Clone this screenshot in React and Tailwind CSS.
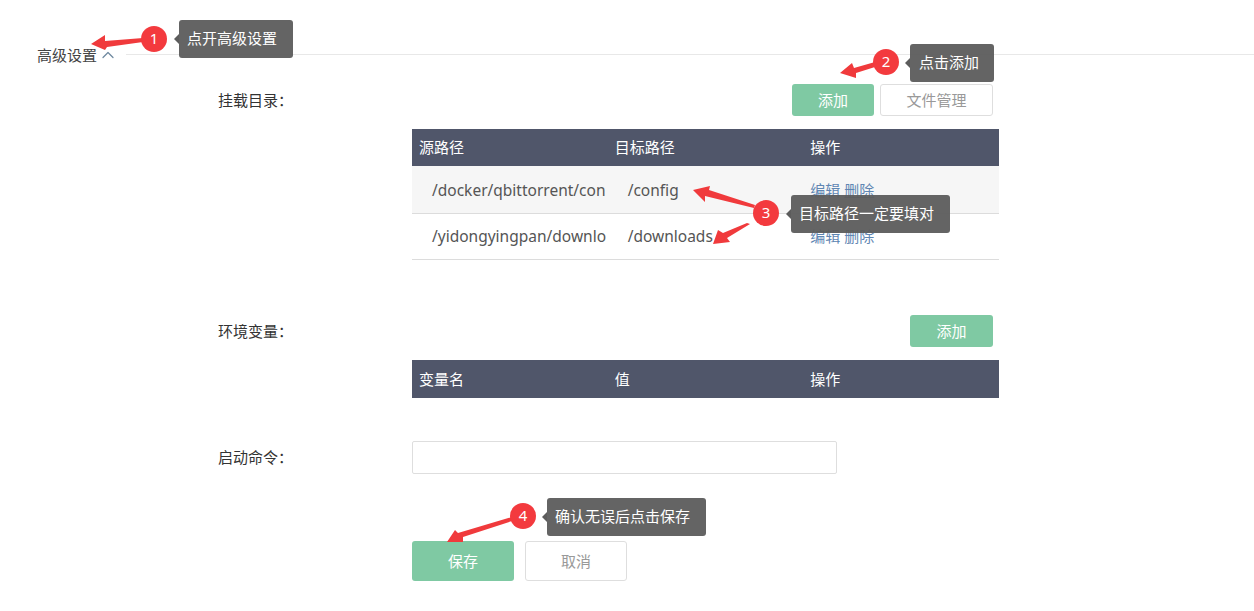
import { ChevronUp } from "lucide-react";

const FONT = "font-['Noto_Sans','Noto_Sans_CJK_SC',sans-serif]";

const MOUNTS = [
  { source: "/docker/qbittorrent/con", target: "/config", striped: true, hover: true },
  { source: "/yidongyingpan/downlo", target: "/downloads" },
];

function HeaderRow({ cols, className = "" }) {
  return (
    <div className={`grid grid-cols-3 items-center bg-[#50566a] text-white text-[15px] ${className}`}>
      {cols.map((c) => (
        <div key={c} className="pl-[7px]">{c}</div>
      ))}
    </div>
  );
}

function MountRow({ row }) {
  return (
    <div className={`grid grid-cols-3 items-center border-b border-[#dcdcdc] text-[#555] ${row.striped ? "h-[48px] pt-[2px] bg-[#f6f6f6]" : "h-[46px] bg-white"}`}>
      <div className="pl-[20px] whitespace-nowrap text-[15.5px]">{row.source}</div>
      <div className="pl-[20px] text-[15.5px]">{row.target}</div>
      <div className="pl-[7px] text-[15px] text-[#5f86b3] whitespace-nowrap">
        <span>编辑</span>
        <span className={`ml-[4px] ${row.hover ? "underline" : ""}`}>删除</span>
      </div>
    </div>
  );
}

function FormRow({ label, children, className = "" }) {
  return (
    <div className={`grid grid-cols-[194px_587px] ${className}`}>
      <div className="h-[32px] leading-[32px] text-[15px] text-[#333]">{label}：</div>
      <div>{children}</div>
    </div>
  );
}

function GreenButton({ children, className = "" }) {
  return (
    <button className={`rounded-[3px] bg-[#7fc9a3] text-white text-[15px] ${className}`}>{children}</button>
  );
}

function OutlineButton({ children, className = "" }) {
  return (
    <button className={`rounded-[3px] border border-[#dedede] bg-white text-[#999] text-[15px] ${className}`}>{children}</button>
  );
}

function Badge({ n, className }) {
  return (
    <div className={`absolute w-[26px] h-[26px] rounded-full bg-[#f33a3e] text-white text-[15px] leading-[25px] text-center ${className}`}>{n}</div>
  );
}

function Tip({ text, className }) {
  return (
    <div className={`absolute h-[38px] rounded-[3px] bg-[#5c5c5c]/95 text-white text-[15px] leading-[37px] whitespace-nowrap ${className}`}>
      <span className="absolute left-[-5px] top-[14px] w-0 h-0 border-y-[5px] border-y-transparent border-r-[5px] border-r-[#5c5c5c]" />
      {text}
    </div>
  );
}

function Arrows() {
  return (
    <svg className="absolute inset-0" width="1254" height="611" viewBox="0 0 1254 611" fill="#f03a3c">
      <polygon points="91,44 105,35 105,41 143,38 143,42 107,47 105,50" />
      <polygon points="840,73 852,63 854,68 875,62 875,67 856,73 856,78" />
      <polygon points="693,190 710,186 709,190 755,205 754,208 705,196 705,202" />
      <polygon points="713,244 730,242 727,238 750,224 747,223 723,233 718,230" />
      <polygon points="447,542 455,530 458,533 512,517 512,521 463,537 463,542" />
    </svg>
  );
}

export default function App() {
  return (
    <div className={`relative w-[1254px] h-[611px] overflow-hidden bg-white ${FONT}`}>
      {/* Advanced settings heading */}
      <div className="flex items-start h-[20px] mt-[45px] pl-[37px]">
        <span className="text-[15px] leading-[20px] text-[#444]">高级设置</span>
        <ChevronUp className="w-[20px] h-[20px] ml-[1px] text-[#6f8aa0]" strokeWidth={1.5} />
        <div className="flex-1 ml-[8px] mt-[9px] border-t border-[#e8e8e8]" />
      </div>

      <div className="pl-[218px] mt-[19px]">
        {/* Mounts */}
        <FormRow label="挂载目录">
          <div className="flex justify-end gap-[6px] pr-[6px]">
            <GreenButton className="w-[82px] h-[32px]">添加</GreenButton>
            <OutlineButton className="w-[113px] h-[32px]">文件管理</OutlineButton>
          </div>
          <div className="mt-[13px]">
            <HeaderRow cols={["源路径", "目标路径", "操作"]} className="h-[37px]" />
            {MOUNTS.map((row) => (
              <MountRow key={row.target} row={row} />
            ))}
          </div>
        </FormRow>

        {/* Env vars */}
        <FormRow label="环境变量" className="mt-[55px]">
          <div className="flex justify-end pr-[6px]">
            <GreenButton className="w-[83px] h-[32px]">添加</GreenButton>
          </div>
          <div className="mt-[13px]">
            <HeaderRow cols={["变量名", "值", "操作"]} className="h-[38px]" />
          </div>
        </FormRow>

        {/* Start command */}
        <FormRow label="启动命令" className="mt-[43px]">
          <input className="block w-[425px] h-[33px] rounded-[2px] border border-[#dedede] bg-white" />
        </FormRow>

        <div className="flex gap-[11px] ml-[194px] mt-[67px]">
          <GreenButton className="w-[102px] h-[40px]">保存</GreenButton>
          <OutlineButton className="w-[102px] h-[40px]">取消</OutlineButton>
        </div>
      </div>

      {/* Annotations */}
      <Arrows />
      <Badge n="1" className="left-[141px] top-[26px]" />
      <Tip text="点开高级设置" className="left-[179px] top-[20px] w-[114px] pl-[8px]" />
      <Badge n="2" className="left-[873px] top-[49px]" />
      <Tip text="点击添加" className="left-[910px] top-[44px] w-[84px] pl-[9px]" />
      <Badge n="3" className="left-[753px] top-[200px]" />
      <Tip text="目标路径一定要填对" className="left-[791px] top-[195px] w-[159px] pl-[8px]" />
      <Badge n="4" className="left-[510px] top-[503px]" />
      <Tip text="确认无误后点击保存" className="left-[547px] top-[498px] w-[159px] pl-[8px]" />
    </div>
  );
}
